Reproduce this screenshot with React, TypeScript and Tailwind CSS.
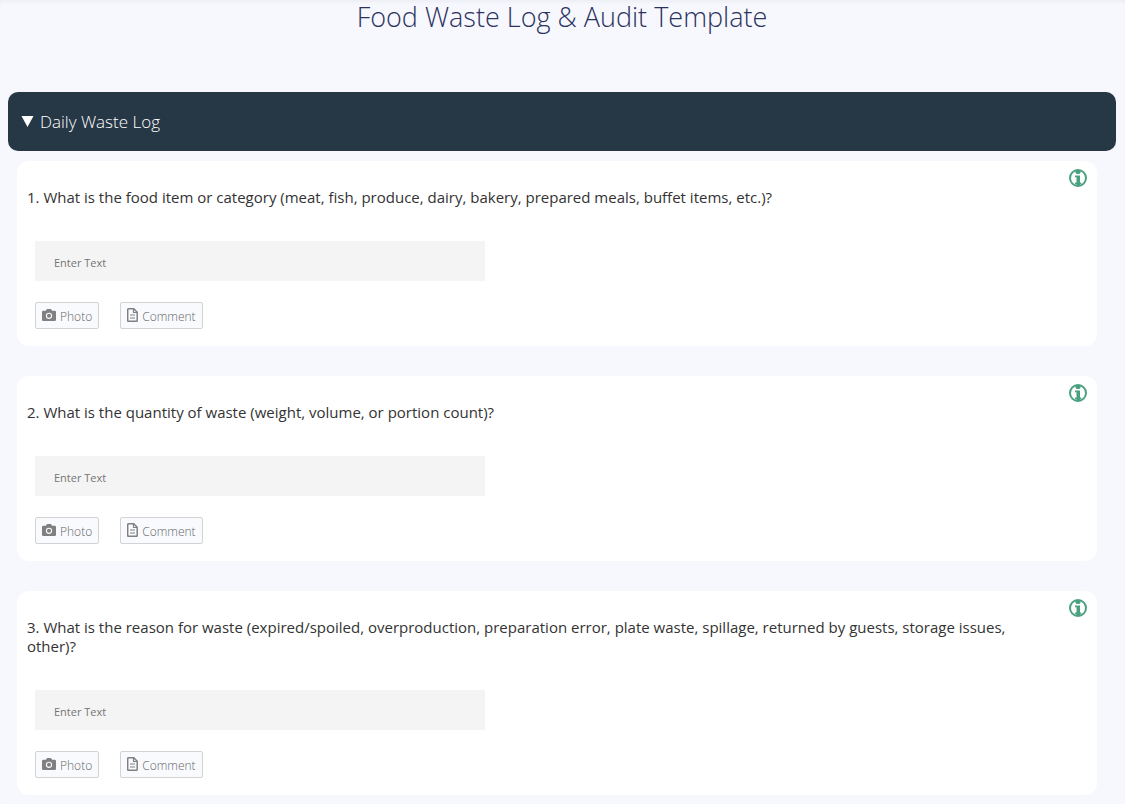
import { useState } from 'react';

const questions = [
  {
    id: 1,
    text: 'What is the food item or category (meat, fish, produce, dairy, bakery, prepared meals, buffet items, etc.)?',
  },
  {
    id: 2,
    text: 'What is the quantity of waste (weight, volume, or portion count)?',
  },
  {
    id: 3,
    text: 'What is the reason for waste (expired/spoiled, overproduction, preparation error, plate waste, spillage, returned by guests, storage issues, other)?',
  },
];

function InfoIcon() {
  return (
    <svg width="20" height="20" viewBox="0 0 20 20" fill="none" aria-hidden="true">
      <circle cx="10" cy="10" r="8" stroke="#4aa181" strokeWidth="2" />
      <path d="M7.500 2.500h5v2.200q0 1.300-2.500 1.300T7.500 4.700z" fill="#4aa181" />
      <path d="M7 7.500h5v7h1.300v1.700H7v-1.700h1.500V9.200H7z" fill="#4aa181" />
      <path d="M8.500 15h3.500v2.500H8.500z" fill="#4aa181" />
    </svg>
  );
}

function CameraIcon() {
  return (
    <svg width="14" height="12" viewBox="0 0 14 12" aria-hidden="true">
      <path
        d="M1.200 1.800h2.700L4.600.5Q4.800 0 5.400 0h3.200q.6 0 .8.5l.7 1.300h2.700Q14 1.800 14 3v7.800q0 1.200-1.200 1.200H1.200Q0 12 0 10.800V3q0-1.200 1.200-1.200z"
        fill="#808080"
      />
      <circle cx="7" cy="6.800" r="2.600" fill="none" stroke="#f8fafd" strokeWidth="1.100" />
    </svg>
  );
}

function CommentIcon() {
  return (
    <svg width="11" height="14" viewBox="0 0 11 14" fill="none" stroke="#808080" aria-hidden="true">
      <path d="M1.400.8h5.400l3.400 3.400v8.400q0 .7-.7.7H1.400q-.7 0-.7-.7V1.500q0-.7.7-.7z" strokeWidth="1.500" />
      <path d="M6.500 1v3.500H10M3 7h5M3 10h5" strokeWidth="1.200" />
    </svg>
  );
}

function QuestionCard({ id, text }: { id: number; text: string }) {
  const [value, setValue] = useState('');
  const inputId = `answer-${id}`;

  return (
    <div className="relative rounded-xl bg-white pt-[27px] pb-[17px] pl-[10px] pr-12">
      <button type="button" aria-label="More information" className="absolute top-[7px] right-[9px]">
        <InfoIcon />
      </button>

      <label htmlFor={inputId} className="block text-[15px] leading-[19px] text-[#333333]">
        {`${id}. ${text}`}
      </label>

      <div className="mt-[34px] ml-2">
        <input
          id={inputId}
          type="text"
          value={value}
          onChange={(e) => setValue(e.target.value)}
          placeholder="Enter Text"
          className="block h-10 w-full max-w-[450px] bg-[#f4f4f4] px-[19px] pt-0.5 text-[11px] text-[#333333] placeholder:text-[#757575]"
        />

        {/* Attachments */}
        <div className="mt-[21px] flex gap-[21px] text-[12px] font-light text-[#666666]">
          <button
            type="button"
            className="flex h-[27px] items-center gap-1 rounded-xs border border-[#d3d3d3] bg-[#f8fafd] px-[6px] pb-0.5"
          >
            <CameraIcon />
            <span className="pt-1">Photo</span>
          </button>
          <button
            type="button"
            className="flex h-[27px] items-center gap-1 rounded-xs border border-[#d3d3d3] bg-[#f8fafd] px-[6px] pb-0.5"
          >
            <CommentIcon />
            <span className="pt-1">Comment</span>
          </button>
        </div>
      </div>
    </div>
  );
}

export default function App() {
  return (
    <main className="min-h-screen bg-[#f7f8fd] pr-[9px] pb-2 pl-2 font-['Open_Sans','Noto_Sans',sans-serif] shadow-[inset_0_4px_6px_-4px_rgba(0,0,0,0.08)]">
      <h1 className="pb-[58px] text-center text-[27px] leading-[34px] font-light text-[#2b3360]">
        Food Waste Log &amp; Audit Template
      </h1>

      <details open className="group">
        <summary className="flex h-[59px] cursor-pointer list-none items-center gap-[6px] rounded-[10px] bg-[#263746] px-[13px] text-[17px] font-light text-white">
          <svg
            width="13"
            height="11"
            viewBox="0 0 13 11"
            fill="currentColor"
            className="-rotate-90 group-open:rotate-0"
            aria-hidden="true"
          >
            <path d="M.5 0h12L6.500 11z" />
          </svg>
          Daily Waste Log
        </summary>

        <div className="mt-[10px] mr-[19px] ml-[9px] flex flex-col gap-[30px]">
          {questions.map((question) => (
            <QuestionCard key={question.id} id={question.id} text={question.text} />
          ))}
        </div>
      </details>
    </main>
  );
}
